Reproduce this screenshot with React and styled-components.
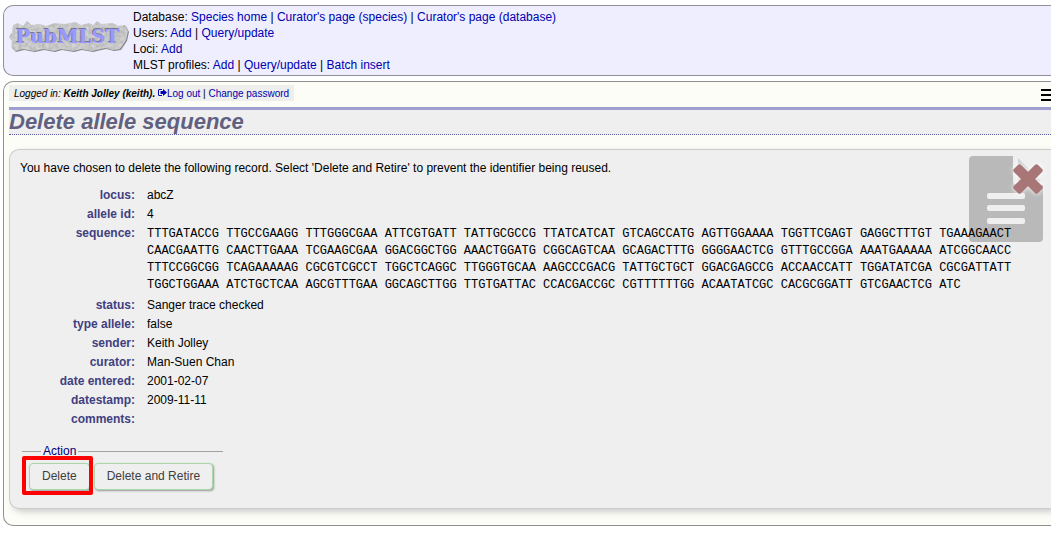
import React from "react";
import styled, { createGlobalStyle } from "styled-components";

const Global = createGlobalStyle`
  * { box-sizing: border-box; }
  body { margin: 0; background: #fff; color: #000; font: 12px/16px "Liberation Sans", Arial, sans-serif; overflow-x: hidden; }
  a { color: #0000b0; text-decoration: none; }
`;

const Page = styled.div`
  display: flex;
  flex-direction: column;
  gap: 5px;
  padding: 5px 0 0 3px;
`;

const Header = styled.header`
  display: flex;
  gap: 4px;
  padding: 3px 0 2px 5px;
  background: #eeeeff;
  border: 1px solid #909098;
  border-right: 0;
  border-radius: 10px 0 0 10px;
`;

const Logo = styled.svg`
  flex: none;
  width: 120px;
  height: 34px;
  margin-top: 12px;
`;

const Main = styled.main`
  padding: 3px 0 16px 5px;
  background: #fdfdf8;
  border: 1px solid #909090;
  border-right: 0;
  border-radius: 10px 0 0 10px;
`;

const TopBar = styled.div`
  display: flex;
  justify-content: space-between;
  height: 22px;
`;

const Login = styled.div`
  height: 16px;
  padding: 0 5px;
  background: #eeeeec;
  font-size: 10px;
  line-height: 17px;
`;

const MenuButton = styled.button`
  display: block;
  width: 10px;
  height: 20px;
  padding: 2px 0 0;
  border: 0;
  background: none;
  overflow: hidden;
`;

const Title = styled.h1`
  margin: 0 0 14px;
  height: 28px;
  border-top: 3px solid #a0a0d0;
  border-bottom: 1px dotted #6060a0;
  background: #efefef;
  color: #606080;
  font-size: 22px;
  font-style: italic;
  line-height: 23px;
`;

const Box = styled.section`
  position: relative;
  padding: 10px 0 18px 10px;
  background: #efefef;
  border: 1px solid #ccc;
  border-right: 0;
  border-radius: 10px 0 0 10px;
  box-shadow: 3px 3px 6px #ccc;
`;

const Watermark = styled.svg`
  position: absolute;
  top: 5px;
  right: 4px;
  width: 78px;
  height: 90px;
`;

const Intro = styled.p`
  margin: 0 0 11px;
`;

const Record = styled.dl`
  position: relative;
  display: grid;
  grid-template-columns: 115px 1fr;
  gap: 2px 12px;
  margin: 0;
  line-height: 17px;
`;

const Label = styled.dt`
  color: #404080;
  font-weight: bold;
  text-align: right;
`;

const Value = styled.dd`
  margin: 0;
`;

const Sequence = styled(Value)`
  padding: 1px 0;
  font-family: "Liberation Mono", "Courier New", monospace;
  white-space: pre;
`;

const Actions = styled.fieldset`
  width: 201px;
  margin: 15px 0 0 2px;
  padding: 4px 0 0 7px;
  border: 0;
  border-top: 1px solid #a0a0a0;
  display: flex;
  gap: 4px;
  min-width: 0;
`;

const Legend = styled.legend`
  margin-left: 12px;
  padding: 0 2px;
  color: #000080;
`;

const ActionButton = styled.button`
  position: relative;
  height: 27px;
  padding: 0 12px 2px;
  border: 1px solid #a8d8a8;
  border-radius: 4px;
  background: #efefef;
  box-shadow: 1px 1px 2px #999;
  color: #404040;
  font: inherit;
  white-space: nowrap;
  ${(p) => p.$marked && `
    &::after {
      content: "";
      position: absolute;
      inset: -8px -4px -6px -8px;
      border: 4px solid #f00;
      border-radius: 2px;
    }
  `}
`;

const SEQUENCE = [
  "TTTGATACCG TTGCCGAAGG TTTGGGCGAA ATTCGTGATT TATTGCGCCG TTATCATCAT GTCAGCCATG AGTTGGAAAA TGGTTCGAGT GAGGCTTTGT TGAAAGAACT",
  "CAACGAATTG CAACTTGAAA TCGAAGCGAA GGACGGCTGG AAACTGGATG CGGCAGTCAA GCAGACTTTG GGGGAACTCG GTTTGCCGGA AAATGAAAAA ATCGGCAACC",
  "TTTCCGGCGG TCAGAAAAAG CGCGTCGCCT TGGCTCAGGC TTGGGTGCAA AAGCCCGACG TATTGCTGCT GGACGAGCCG ACCAACCATT TGGATATCGA CGCGATTATT",
  "TGGCTGGAAA ATCTGCTCAA AGCGTTTGAA GGCAGCTTGG TTGTGATTAC CCACGACCGC CGTTTTTTGG ACAATATCGC CACGCGGATT GTCGAACTCG ATC",
].join("\n");

const DETAILS = [
  ["status", "Sanger trace checked"],
  ["type allele", "false"],
  ["sender", "Keith Jolley"],
  ["curator", "Man-Suen Chan"],
  ["date entered", "2001-02-07"],
  ["datestamp", "2009-11-11"],
  ["comments", ""],
];

const NAV = [
  ["Database", ["Species home", "Curator's page (species)", "Curator's page (database)"]],
  ["Users", ["Add", "Query/update"]],
  ["Loci", ["Add"]],
  ["MLST profiles", ["Add", "Query/update", "Batch insert"]],
];

function Links({ items }) {
  return items.map((t, i) => (
    <React.Fragment key={t}>{i > 0 && " | "}<a href="#">{t}</a></React.Fragment>
  ));
}

function Field({ name, children }) {
  return <><Label>{name}:</Label><Value>{children}</Value></>;
}

const STONE = "M4 4 9 2 14 5 18 0 22 4 31 3 37 5 45 2 56 3 66 1 72 4 80 2 84 4 88 0 92 3 104 2 109 5 116 4 119 10 117 19 111 28 104 29 96 27 83 30 72 28 64 30 52 28 45 30 34 28 25 30 14 28 6 30 2 26 3 20 0 16 3 11Z";

function PubMLSTLogo() {
  return (
    <Logo viewBox="0 0 120 34" role="img" aria-label="PubMLST">
      <defs>
        <filter id="stone" x="0" y="0" width="100%" height="100%" colorInterpolationFilters="sRGB">
          <feTurbulence type="fractalNoise" baseFrequency="0.3" numOctaves="3" seed="4" />
          <feColorMatrix values="0.2 0 0 0 0.68  0.2 0 0 0 0.68  0.2 0 0 0 0.68  0 0 0 0 1" />
          <feComposite in2="SourceGraphic" operator="in" />
        </filter>
      </defs>
      <path d={STONE} transform="translate(1 1)" fill="#888890" />
      <path d={STONE} filter="url(#stone)" />
      <g fontFamily="'DejaVu Serif', serif" fontWeight="bold" fontSize="19">
        <text x="6" y="21" fill="#77778c">PubMLST</text>
        <text x="7" y="22" fill="#9999ff">PubMLST</text>
      </g>
    </Logo>
  );
}

export default function App() {
  return (
    <>
      <Global />
      <Page>
        <Header>
          <PubMLSTLogo />
          <nav>
            {NAV.map(([name, items]) => <div key={name}>{name}: <Links items={items} /></div>)}
          </nav>
        </Header>
        <Main>
          <TopBar>
            <Login>
              <i>Logged in: <b>Keith Jolley (keith).</b></i>{" "}
              <a href="#">
                <svg width="9" height="8" viewBox="0 0 9 8" fill="currentColor" aria-hidden="true">
                  <path d="M4 0H1.5Q0 0 0 1.5V5.5Q0 7 1.5 7H4V6H1.5Q1 6 1 5.5V1.5Q1 1 1.5 1H4ZM5 0 9 3.5 5 7V5H2.5V2H5Z" />
                </svg>
                Log out
              </a>{" | "}<a href="#">Change password</a>
            </Login>
            <MenuButton aria-label="Menu">
              <svg width="14" height="14" viewBox="0 0 14 14" aria-hidden="true">
                <path d="M0 1H14V3H0ZM0 6H14V8H0ZM0 11H14V13H0Z" />
              </svg>
            </MenuButton>
          </TopBar>
          <Title>Delete allele sequence</Title>
          <Box>
            <Watermark viewBox="0 0 78 90" aria-hidden="true">
              <defs>
                <filter id="glow" x="-50%" y="-50%" width="200%" height="200%">
                  <feGaussianBlur stdDeviation="2.5" />
                </filter>
                <g id="cross">
                  <rect x="-17" y="-5" width="34" height="10" rx="2" transform="rotate(45)" />
                  <rect x="-17" y="-5" width="34" height="10" rx="2" transform="rotate(-45)" />
                </g>
              </defs>
              <path d="M4 1H44V26Q44 30 48 30H74V83Q74 87 70 87H4Q0 87 0 83V5Q0 1 4 1Z" fill="#b9b9b9" />
              <path d="M49 3 72 26H49Z" fill="#cfd1d3" />
              <path d="M20 38H54Q56 38 56 40V42Q56 44 54 44H20Q18 44 18 42V40Q18 38 20 38ZM20 50H54Q56 50 56 52V54Q56 56 54 56H20Q18 56 18 54V52Q18 50 20 50ZM20 63H54Q56 63 56 65V67Q56 69 54 69H20Q18 69 18 67V65Q18 63 20 63Z" fill="#efefef" />
              <use href="#cross" x="59" y="24" fill="#fff" filter="url(#glow)" />
              <use href="#cross" x="59" y="24" fill="#a87676" />
            </Watermark>
            <Intro>You have chosen to delete the following record. Select 'Delete and Retire' to prevent the identifier being reused.</Intro>
            <Record>
              <Field name="locus">abcZ</Field>
              <Field name="allele id">4</Field>
              <Label>sequence:</Label>
              <Sequence>{SEQUENCE}</Sequence>
              {DETAILS.map(([name, value]) => <Field key={name} name={name}>{value}</Field>)}
            </Record>
            <Actions>
              <Legend>Action</Legend>
              <ActionButton type="button" $marked>Delete</ActionButton>
              <ActionButton type="button">Delete and Retire</ActionButton>
            </Actions>
          </Box>
        </Main>
      </Page>
    </>
  );
}
